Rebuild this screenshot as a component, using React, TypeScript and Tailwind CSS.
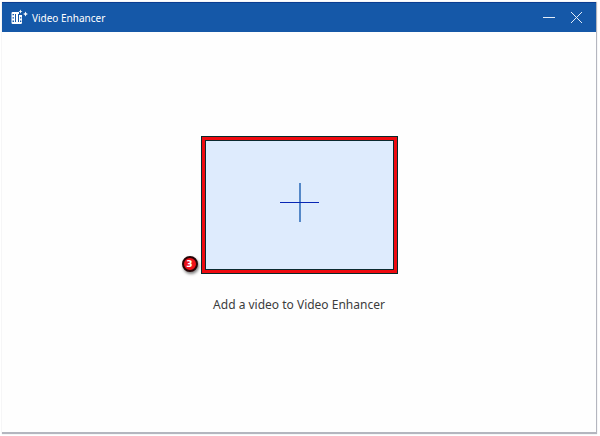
const TitleBar = () => {
	return (
		<header className="flex h-[30px] shrink-0 items-center border-t border-[#0b3d91] bg-[#1558a8] pl-2 pr-3 text-white">
			<svg width="18" height="18" viewBox="0 0 18 18" className="shrink-0" aria-hidden="true">
				{/* film strip */}
				<path
					d="M2.7 3H9v3h3v7.8a1.2 1.2 0 0 1-1.2 1.2H2.7a1.2 1.2 0 0 1-1.2-1.2V4.2A1.2 1.2 0 0 1 2.7 3z"
					fill="#fff"
				/>
				<path
					d="M2.5 5H4v1.3H2.5zM2.5 8.3H4v1.3H2.5zM2.5 11.6H4v1.3H2.5zM5 5h1v8H5zM8 5h1v8H8zM10 8.3h1.3v1.3H10zM10 11.6h1.3v1.3H10z"
					fill="#1558a8"
				/>
				{/* sparkles */}
				<path d="M10.5.5l.6 1.4 1.4.6-1.4.6-.6 1.4-.6-1.4-1.4-.6 1.4-.6z" fill="#fff" />
				<path d="M15.5 2.5l.8 1.7 1.7.8-1.7.8-.8 1.7-.8-1.7L13 5l1.7-.8z" fill="#fff" />
			</svg>
			<h1 className="ml-1 flex-1 text-[10px] leading-4">Video Enhancer</h1>
			<div className="flex items-center gap-3">
				<button type="button" aria-label="Minimize" className="flex size-4 items-center justify-center">
					<svg width="16" height="16" viewBox="0 0 16 16" aria-hidden="true">
						<path d="M3 7.5h12" stroke="#e3edf9" />
					</svg>
				</button>
				<button type="button" aria-label="Close" className="flex size-4 items-center justify-center">
					<svg width="16" height="16" viewBox="0 0 16 16" aria-hidden="true">
						<path d="M3 2l11 11M14 2L3 13" stroke="#e3edf9" />
					</svg>
				</button>
			</div>
		</header>
	);
};

const StepBadge = ({ step }: { step: number }) => {
	return (
		<span className="absolute -left-[19px] bottom-0.5 flex size-4 items-center justify-center rounded-full border-2 border-[#260406] bg-[#ee1119] font-['DejaVu_Sans',Verdana,sans-serif] text-[9px] font-bold leading-3 text-white shadow-[1px_2px_3px_rgba(0,0,0,0.5)]">
			{step}
		</span>
	);
};

export default function App() {
	return (
		<div className="flex min-h-screen bg-white pb-0.5 pl-0.5 pr-[3px] pt-0.5 font-['Noto_Sans','Open_Sans',sans-serif]">
			<div className="flex flex-1 flex-col border-b-2 border-r border-[#b4b6bf] bg-[#fefefe] shadow-[0_0_1px_#c8c8cc]">
				<TitleBar />
				<main className="flex flex-1 flex-col items-center justify-center pb-[14px]">
					<div className="relative">
						<button
							type="button"
							aria-labelledby="add-label"
							className="flex h-[138px] w-[197px] items-center justify-center border border-[#06292b] bg-[#ee0a10] p-[3px]"
						>
							<span className="flex size-full items-center justify-center border border-[#0a2a30] bg-[#deebfd] pb-1">
								<svg width="39" height="40" viewBox="0 0 39 40" shapeRendering="crispEdges" aria-hidden="true">
									<path d="M20 0v39" stroke="#5588c8" strokeWidth="2" />
									<path d="M0 19.5h39" stroke="#0826b4" />
								</svg>
							</span>
						</button>
						<StepBadge step={3} />
					</div>
					<p id="add-label" className="mt-[21px] text-[12px] leading-5 text-[#3c3c3c]">
						Add a video to Video Enhancer
					</p>
				</main>
			</div>
		</div>
	);
}
